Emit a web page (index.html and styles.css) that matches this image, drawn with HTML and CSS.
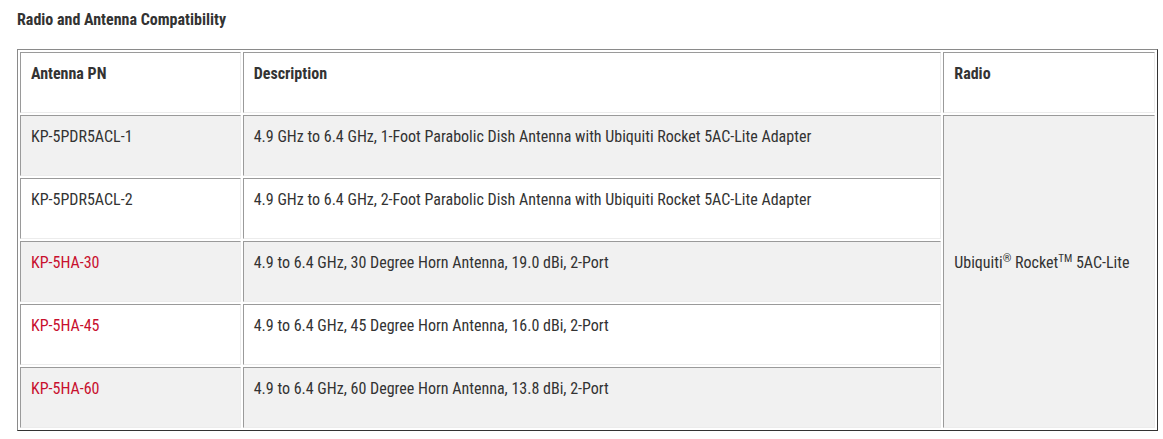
FILE: index.html
```html
<!DOCTYPE html>
<html>
<head>
<meta charset="utf-8">
<link rel="stylesheet" href="styles.css">
</head>
<body>
<div class="page">
  <h2 class="title">Radio and Antenna Compatibility</h2>
  <table class="compat">
    <thead>
      <tr>
        <th class="c-pn">Antenna PN</th>
        <th class="c-desc">Description</th>
        <th class="c-radio">Radio</th>
      </tr>
    </thead>
    <tbody>
      <tr class="alt">
        <td>KP-5PDR5ACL-1</td>
        <td>4.9 GHz to 6.4 GHz, 1-Foot Parabolic Dish Antenna with Ubiquiti Rocket 5AC-Lite Adapter</td>
        <td class="radio" rowspan="5">Ubiquiti<sup>®</sup> Rocket<sup>TM</sup> 5AC-Lite</td>
      </tr>
      <tr>
        <td>KP-5PDR5ACL-2</td>
        <td>4.9 GHz to 6.4 GHz, 2-Foot Parabolic Dish Antenna with Ubiquiti Rocket 5AC-Lite Adapter</td>
      </tr>
      <tr class="alt">
        <td><a class="pn-link" href="#">KP-5HA-30</a></td>
        <td>4.9 to 6.4 GHz, 30 Degree Horn Antenna, 19.0 dBi, 2-Port</td>
      </tr>
      <tr>
        <td><a class="pn-link" href="#">KP-5HA-45</a></td>
        <td>4.9 to 6.4 GHz, 45 Degree Horn Antenna, 16.0 dBi, 2-Port</td>
      </tr>
      <tr class="alt">
        <td><a class="pn-link" href="#">KP-5HA-60</a></td>
        <td>4.9 to 6.4 GHz, 60 Degree Horn Antenna, 13.8 dBi, 2-Port</td>
      </tr>
    </tbody>
  </table>
</div>
</body>
</html>
```

FILE: styles.css
```css
html, body {
  margin: 0;
  padding: 0;
  background: #ffffff;
}

.page {
  padding: 10px 6px 0 17px;
  font-family: Roboto, "Liberation Sans", sans-serif;
  font-stretch: 75%;
  color: #333333;
}

.title {
  margin: 0 0 19px 0;
  font-size: 16px;
  line-height: 20px;
  font-weight: 700;
  color: #333333;
}

.compat {
  width: 1141px;
  border-collapse: separate;
  border-spacing: 2px;
  border-style: solid;
  border-width: 1px;
  border-color: #8a8a8a #333333 #333333 #8a8a8a;
  font-size: 16px;
}

.compat th,
.compat td {
  text-align: left;
  padding: 9px 10px 26px 10px;
  line-height: 24px;
  vertical-align: middle;
  border-style: solid;
  border-width: 1px;
  border-color: #9a9a9a #ececec #ececec #9a9a9a;
  background: #ffffff;
}

.compat th {
  font-weight: 700;
}

.c-pn { width: 199px; }
.c-desc { width: 678px; }
.c-radio { width: 190px; }

.compat tr.alt td,
.compat td.radio {
  background: #f1f1f1;
}

.pn-link {
  color: #c8102e;
  text-decoration: none;
}

.compat sup {
  font-size: 11px;
  line-height: 0;
  vertical-align: 6px;
}
```
